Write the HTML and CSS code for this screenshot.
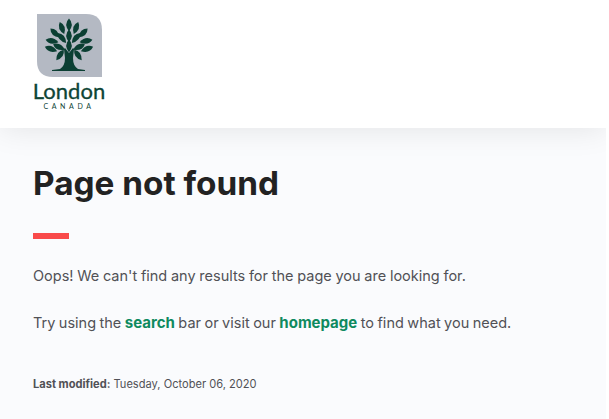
FILE: index.html
```html
<html lang="en">
  <head>
    <meta charset="UTF-8" />
    <title>Page not found</title>
    <link rel="stylesheet" href="styles.css">
  </head>
  <body>
    <header class="site-header">
      <a class="logo" href="#">
        <svg class="logo-mark" width="65" height="63" viewBox="0 0 65 63">
          <defs>
            <path id="leaf" d="M0-6.5Q5.5-1 0 6.5Q-5.5-1 0-6.5Z" />
          </defs>
          <path class="logo-tile" d="M0 0H49Q65 0 65 16V63H16Q0 63 0 47Z" />
          <g class="logo-tree">
            <path d="M28 34L32 39L36 34L37 35L36 44Q36 52 41 55L48 56V57H15V56L23 55Q28 52 28 44L27 35Z" />
            <use href="#leaf" transform="translate(32 11)" />
            <use href="#leaf" transform="translate(25 14) rotate(-20)" />
            <use href="#leaf" transform="translate(39 14) rotate(20)" />
            <use href="#leaf" transform="translate(18 19) rotate(-45)" />
            <use href="#leaf" transform="translate(46 19) rotate(45)" />
            <use href="#leaf" transform="translate(32 22)" />
            <use href="#leaf" transform="translate(25 24) rotate(-40)" />
            <use href="#leaf" transform="translate(39 24) rotate(40)" />
            <use href="#leaf" transform="translate(15 27) rotate(-80)" />
            <use href="#leaf" transform="translate(49 27) rotate(80)" />
            <use href="#leaf" transform="translate(22 33) rotate(-65)" />
            <use href="#leaf" transform="translate(42 33) rotate(65)" />
            <use href="#leaf" transform="translate(14 35) rotate(-70)" />
            <use href="#leaf" transform="translate(50 35) rotate(70)" />
            <use href="#leaf" transform="translate(32 32)" />
            <use href="#leaf" transform="translate(23 41) rotate(35)" />
            <use href="#leaf" transform="translate(41 41) rotate(-35)" />
          </g>
        </svg>
        <span class="logo-name">London</span>
        <span class="logo-sub">CANADA</span>
      </a>
    </header>
    <main class="content">
      <h1>Page not found</h1>
      <div class="rule"></div>
      <p>Oops! We can't find any results for the page you are looking for.</p>
      <p class="tight">Try using the <a href="#">search</a> bar or visit our <a href="#">homepage</a> to find what you need.</p>
      <div class="modified"><strong>Last modified:</strong> Tuesday, October 06, 2020</div>
    </main>
  </body>
</html>
```

FILE: styles.css
```css
html {
  background-color: #fff;
}
body {
  margin: 0;
  width: 606px;
  height: 419px;
  overflow: hidden;
  background-color: #fafbfd;
  font-family: Inter, "Noto Sans", sans-serif;
  color: #515156;
}
.site-header {
  height: 128px;
  padding: 14px 33px 0;
  box-sizing: border-box;
  background-color: #fff;
  box-shadow: 0 0 30px rgba(0, 0, 0, 0.1);
}
.logo {
  display: flex;
  flex-direction: column;
  align-items: center;
  width: 72px;
  color: #0e4535;
  text-decoration: none;
}
.logo-mark {
  display: block;
}
.logo-tile {
  fill: #b4b9c3;
}
.logo-tree {
  fill: #0b3f33;
}
.logo-name {
  font-family: Lato, sans-serif;
  font-size: 22px;
  line-height: 20px;
  margin-top: 4px;
  -webkit-text-stroke: 0.3px #0e4535;
}
.logo-sub {
  font-family: Lato, sans-serif;
  font-size: 7px;
  line-height: 7px;
  letter-spacing: 3.6px;
  margin-top: 2px;
}
.content {
  padding: 34px 33px 0;
}
h1 {
  margin: 0;
  font-size: 33.3px;
  line-height: 42px;
  font-weight: 700;
  color: #222;
}
.rule {
  width: 36px;
  height: 6px;
  margin: 29px 0 27px;
  background-color: #f94a4a;
}
p {
  margin: 0 0 27px;
  font-size: 14.5px;
  line-height: 20px;
  word-spacing: -0.35px;
}
.tight {
  word-spacing: -0.6px;
}
p a {
  color: #0e8a5f;
  font-size: 15px;
  font-weight: 700;
  text-decoration: none;
}
.modified {
  margin-top: 44px;
  font-size: 11.1px;
  line-height: 14px;
}
```
